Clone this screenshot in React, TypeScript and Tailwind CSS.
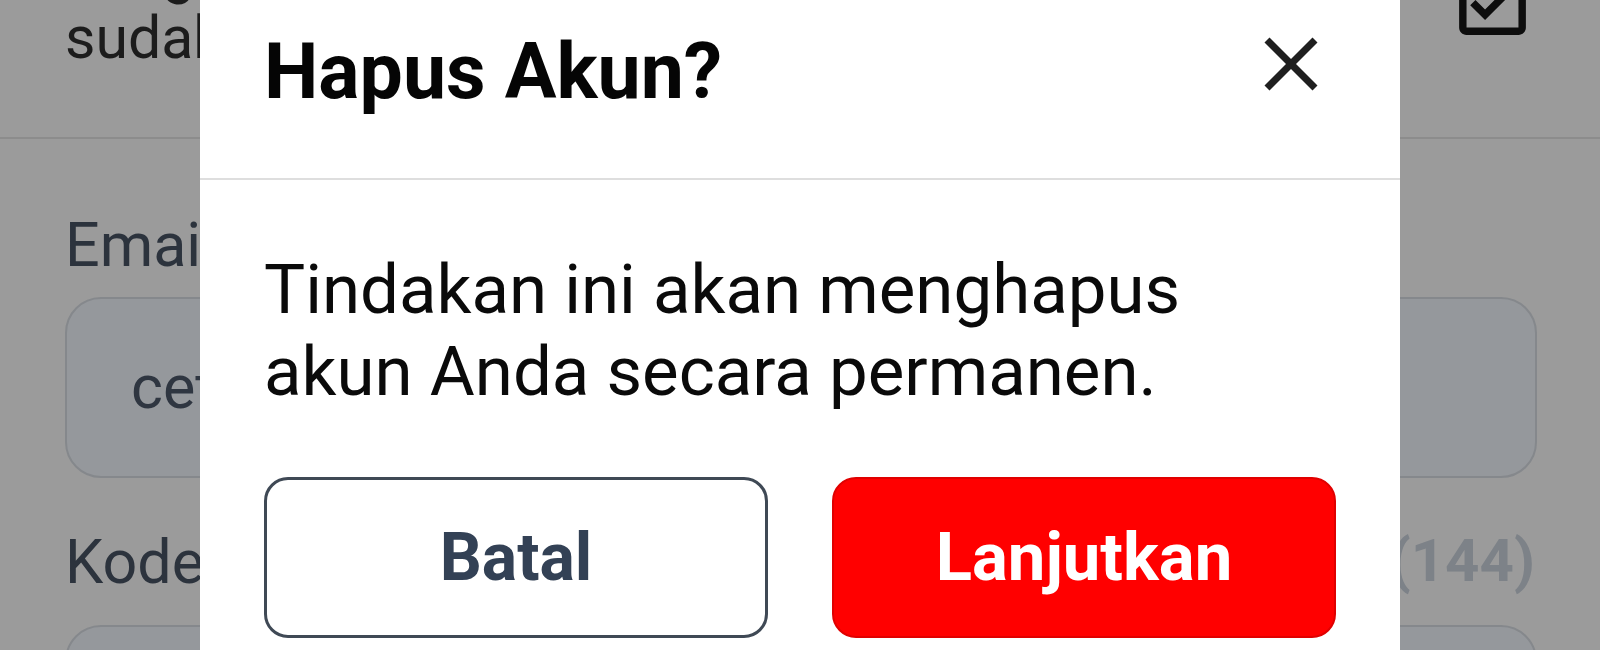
import React from "react";
import { MdOutlineCheckBox } from "react-icons/md";

export default function App() {
  return (
    <div
      className="relative w-[1600px] h-[650px] overflow-hidden bg-[#9b9b9b]"
      style={{ fontFamily: "Roboto, 'Noto Sans', sans-serif" }}
    >
      {/* Background page (dimmed) */}
      <div className="flex flex-col">
        <div className="flex h-[137px] items-start pl-[65px] pr-[63px]">
          <div className="flex-1 mt-[-61px] text-[59px] leading-[66px] text-[#1c1c1c]">
            <div>Jangan lupa,</div>
            <div>sudah</div>
          </div>
          <MdOutlineCheckBox className="mt-[-43px] text-[#0d0d0d]" size={89} />
        </div>
        <div className="h-[2px] bg-[#8c8c8c]" />
        <div className="flex flex-col pl-[65px] pr-[63px]">
          <div className="mt-[73px] text-[61px] leading-[66px] text-[#2c333d]">Email</div>
          <div className="mt-[19px] h-[181px] rounded-[36px] border-2 border-[#85888c] bg-[#95989c] flex items-center pl-[64px] text-[61px] text-[#2f3641]">
            cetak@email.com
          </div>
          <div className="mt-[51px] flex items-start justify-between">
            <div className="text-[61px] leading-[66px] text-[#2c333d]">Kode Verifikasi</div>
            <div className="text-[60px] leading-[66px] font-bold text-[#7d8288] mr-[2px] mt-[-1px]">
              Kirim ulang (144)
            </div>
          </div>
          <div className="mt-[30px] h-[181px] rounded-[36px] border-2 border-[#85888c] bg-[#95989c]" />
        </div>
      </div>

      {/* Modal */}
      <div className="absolute left-[200px] top-[-40px] w-[1200px] h-[760px] rounded-[40px] bg-white flex flex-col">
        <div className="h-[220px] pt-[73px] pl-[64px] pr-[82px] flex justify-between items-start border-b-2 border-[#dedede]">
          <div className="text-[77px] leading-[78px] font-bold text-[#050505]">Hapus Akun?</div>
          <svg width="56" height="56" viewBox="0 0 56 56" className="mt-[3px] mr-[-1px]">
            <line x1="4" y1="4" x2="52" y2="52" stroke="#1f1f1f" strokeWidth="7" />
            <line x1="52" y1="4" x2="4" y2="52" stroke="#1f1f1f" strokeWidth="7" />
          </svg>
        </div>
        <div className="px-[64px] pt-[69px] flex flex-col">
          <div className="text-[69px] leading-[82px] text-[#0a0a0a]">
            Tindakan ini akan menghapus
            <br />
            akun Anda secara permanen.
          </div>
          <div className="mt-[64px] grid grid-cols-2 gap-[64px]">
            <button className="h-[161px] rounded-[24px] border-[3px] border-[#3f4955] bg-white text-[66px] font-bold text-[#334155] flex items-center justify-center">
              Batal
            </button>
            <button className="h-[161px] rounded-[24px] border-2 border-[#e00000] bg-[#ff0000] text-[67px] font-bold text-white flex items-center justify-center">
              Lanjutkan
            </button>
          </div>
        </div>
      </div>
    </div>
  );
}
